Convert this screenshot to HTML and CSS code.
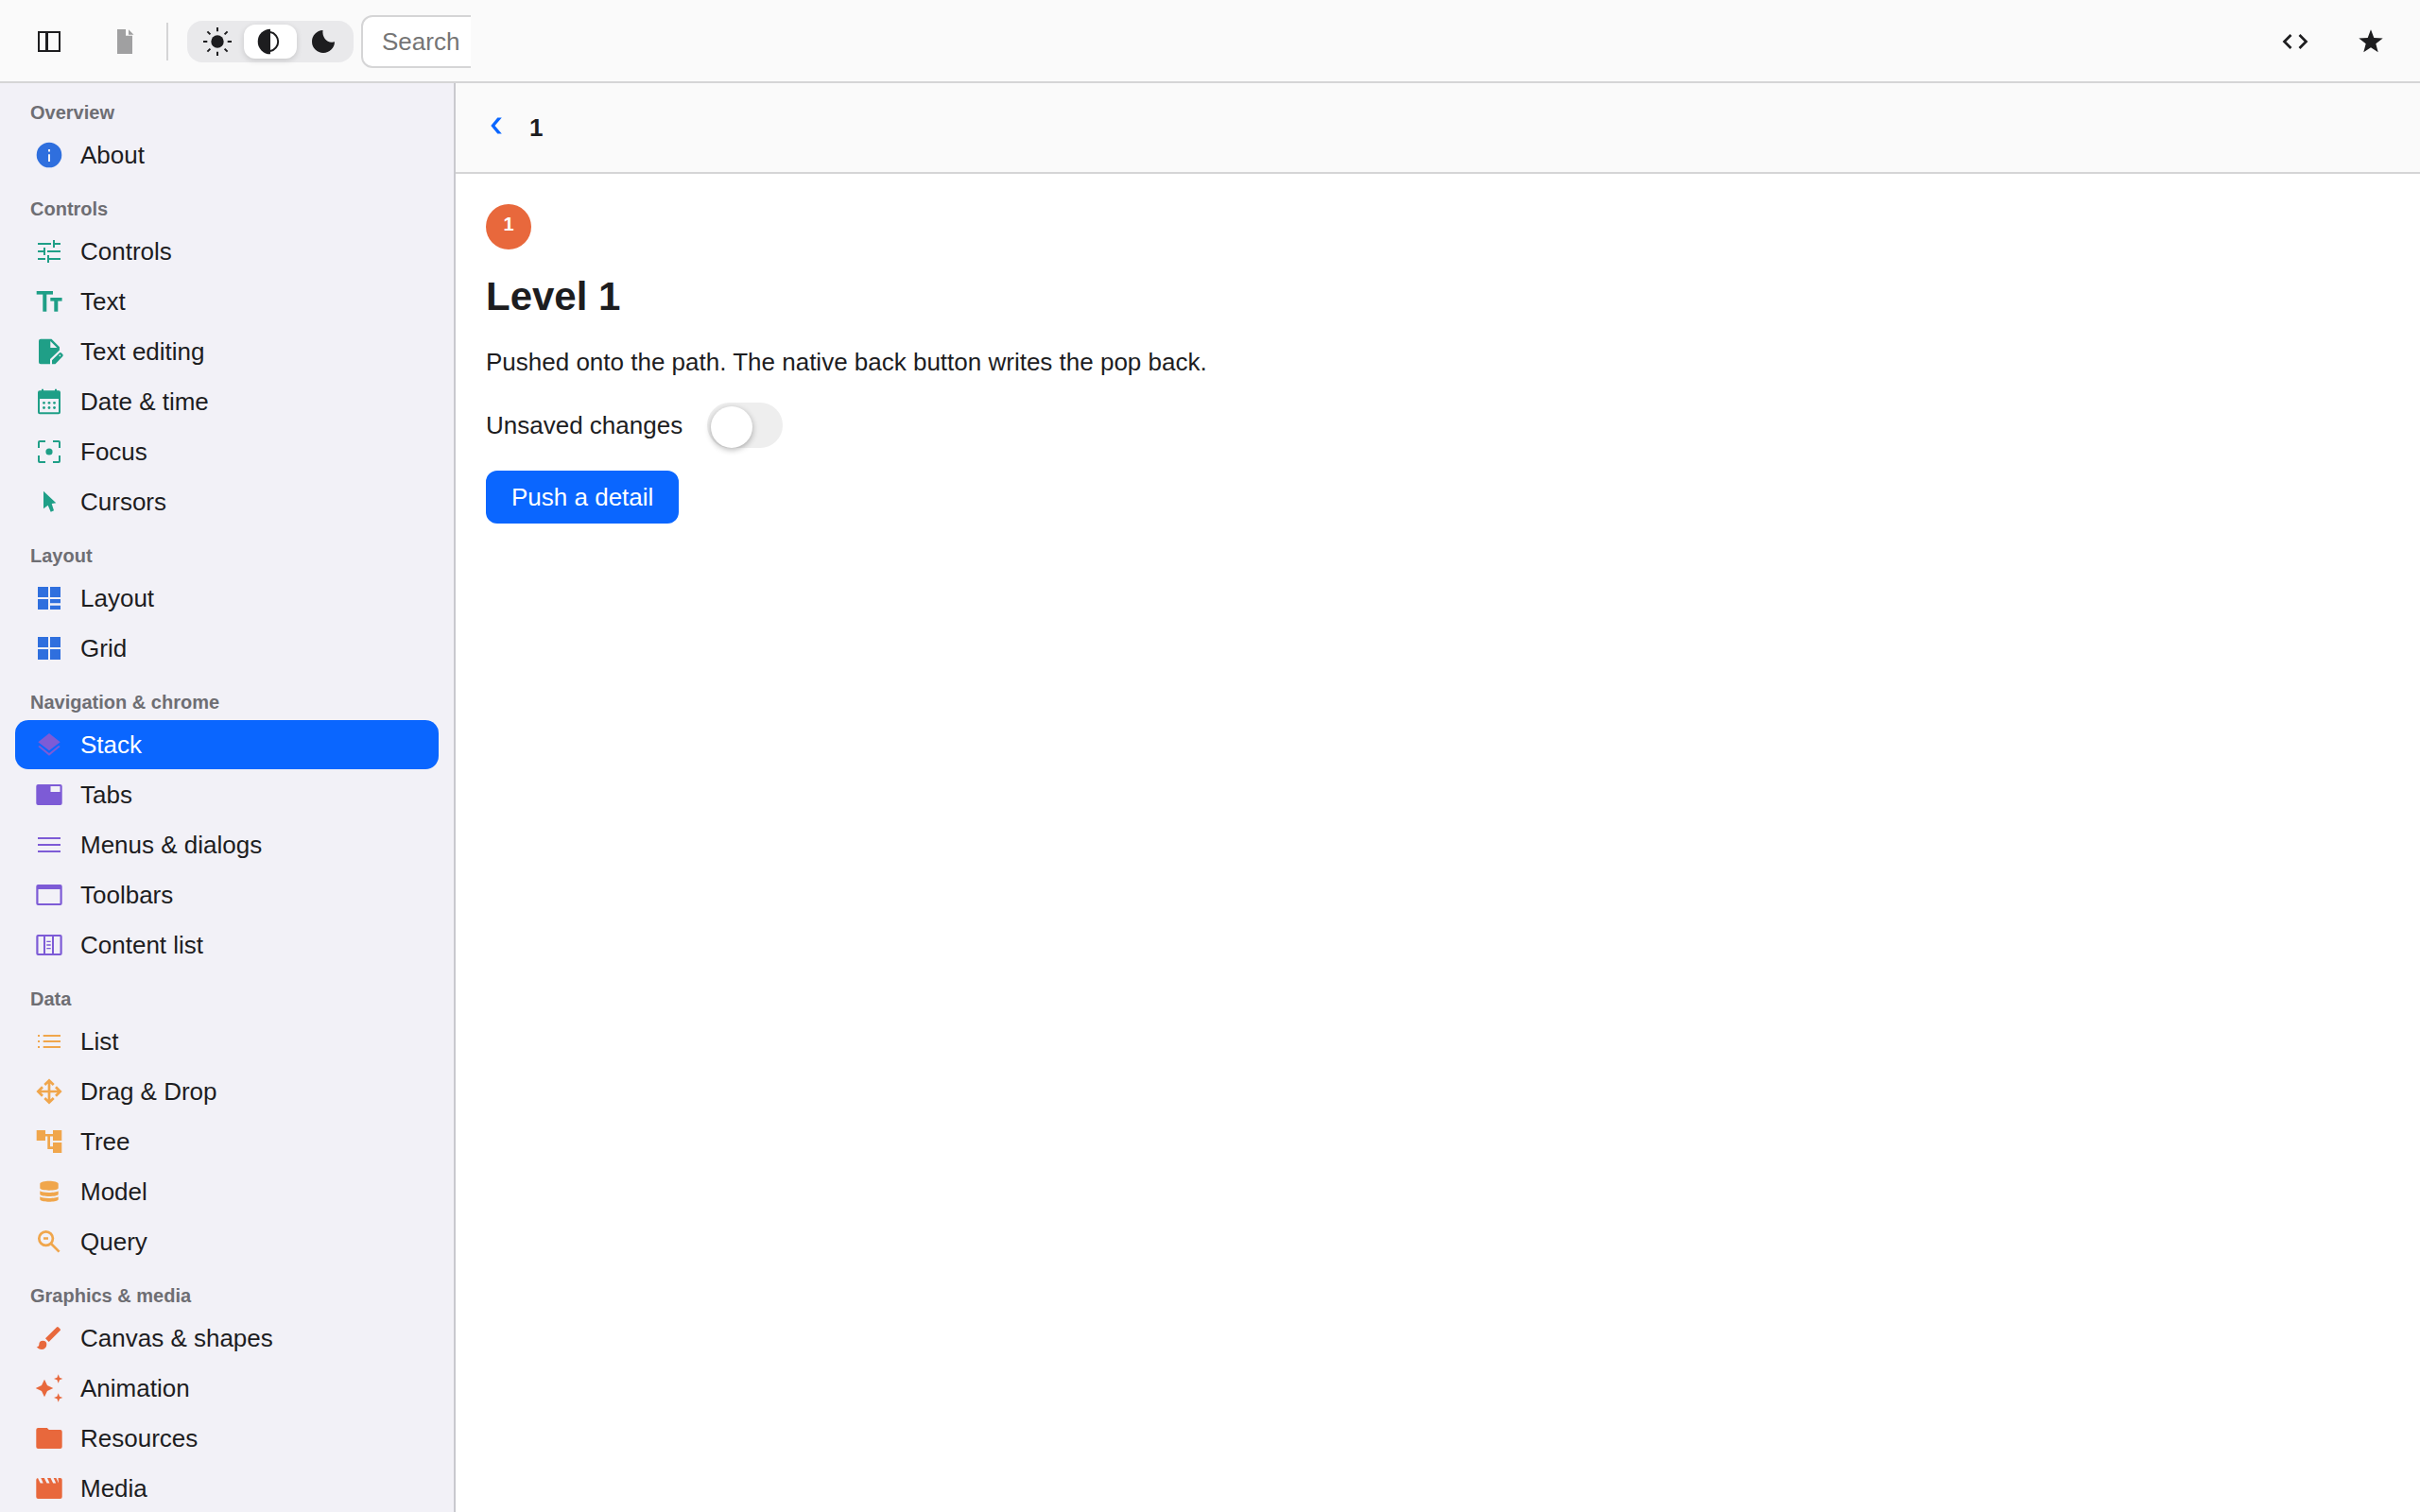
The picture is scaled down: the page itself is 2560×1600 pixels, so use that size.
FILE: index.html
```html
<!DOCTYPE html>
<html lang="en">
<head>
  <title>Stack</title>
  <meta charset="UTF-8" />
  <link rel="stylesheet" href="styles.css">
</head>
<body>
  <header class="toolbar">
    <button class="tool" aria-label="Toggle sidebar">
      <svg class="icon" viewBox="0 0 32 32"><path d="M4 5h24v22H4z M6 7v18h6V7z M15 7v18h11V7z" fill-rule="evenodd"/></svg>
    </button>
    <button class="tool" aria-label="New document" disabled>
      <svg class="icon" viewBox="0 0 32 32"><path d="M8 3h9v6.700h7V29H8z M20 3.300l5.500 5.500H20z"/></svg>
    </button>
    <span class="divider"></span>
    <div class="segmented">
      <button class="segment" aria-label="Light">
        <svg class="icon" viewBox="0 0 32 32"><circle cx="16" cy="16" r="6.700"/><path class="line" d="M16 1v4.300M16 26.700V31M1 16h4.300M26.700 16H31M5.400 5.400l3 3M23.600 23.600l3 3M5.400 26.600l3-3M23.600 8.400l3-3"/></svg>
      </button>
      <button class="segment active" aria-label="Auto">
        <svg class="icon" viewBox="0 0 32 32"><path d="M16 2.700a13.300 13.300 0 0 0 0 26.600z"/><path class="line" d="M16 6a10.200 10.200 0 0 1 0 20"/></svg>
      </button>
      <button class="segment" aria-label="Dark">
        <svg class="icon" viewBox="0 0 32 32"><path d="M15.500 4A12 12 0 1 0 28 16.300C20.500 18.500 14.500 12 15.500 4z"/></svg>
      </button>
    </div>
    <div class="search">
      <input type="text" placeholder="Search" aria-label="Search">
    </div>
    <span class="spacer"></span>
    <button class="tool" aria-label="View source">
      <svg class="icon" viewBox="0 0 32 32"><path class="line thick" d="M11.500 9l-7 7 7 7M20.500 9l7 7-7 7"/></svg>
    </button>
    <button class="tool" aria-label="Favorite">
      <svg class="icon" viewBox="0 0 32 32"><path d="M16 3.300l3.300 8.700 9.400.5-7.400 5.800 2.400 9-7.700-5-7.700 5 2.400-9L3.300 12.500l9.400-.5z"/></svg>
    </button>
  </header>

  <div class="layout">
    <nav class="sidebar">
      <section class="group blue">
        <h2>Overview</h2>
        <a class="item" href="#about">
          <svg class="icon" viewBox="0 0 32 32"><path fill-rule="evenodd" d="M16 2.700a13.300 13.300 0 1 0 0 26.600 13.300 13.300 0 0 0 0-26.600z M15 10v2.600h2V10z M15 15.300V23h2v-7.700z"/></svg>
          About
        </a>
      </section>

      <section class="group green">
        <h2>Controls</h2>
        <a class="item" href="#controls">
          <svg class="icon" viewBox="0 0 32 32"><path class="line" d="M4 8h14M21 4v8M21 8h7M4 16h7M11 12v8M14 16h14M4 24h8M15 20v8M15 24h13"/></svg>
          Controls
        </a>
        <a class="item" href="#text">
          <svg class="icon" viewBox="0 0 32 32"><rect x="2.700" y="5" width="17.300" height="3.600"/><rect x="9.300" y="5" width="4" height="21.700"/><rect x="17.300" y="12" width="12.300" height="3.600"/><rect x="21.300" y="12" width="4" height="14.700"/></svg>
          Text
        </a>
        <a class="item" href="#text-editing">
          <svg class="icon" viewBox="0 0 32 32"><path fill-rule="evenodd" d="M7 2.700h11.500L27 11.200v3.300L17 24v5.300H7a2 2 0 0 1-2-2V4.700a2 2 0 0 1 2-2z M17.300 5v7h7z"/><path fill-rule="evenodd" d="M19 29.300v-4l7.600-7.600a1.800 1.800 0 0 1 2.600 0l1 1a1.800 1.800 0 0 1 0 2.600l-7.700 8z M27.300 19.300l-1 1 1 1 1-1z"/></svg>
          Text editing
        </a>
        <a class="item" href="#date">
          <svg class="icon" viewBox="0 0 32 32"><path fill-rule="evenodd" d="M8 2.700h2v1.600h12V2.700h2v1.600h2a2 2 0 0 1 2 2v21a2 2 0 0 1-2 2H6a2 2 0 0 1-2-2v-21a2 2 0 0 1 2-2h2z M6 13v14.300h20V13z"/><circle cx="10.500" cy="17.300" r="1.400"/><circle cx="16" cy="17.300" r="1.400"/><circle cx="21.500" cy="17.300" r="1.400"/><circle cx="10.500" cy="22.500" r="1.400"/><circle cx="16" cy="22.500" r="1.400"/><circle cx="21.500" cy="22.500" r="1.400"/></svg>
          Date &amp; time
        </a>
        <a class="item" href="#focus">
          <svg class="icon" viewBox="0 0 32 32"><path class="line" d="M12 5H6a1 1 0 0 0-1 1v6M20 5h6a1 1 0 0 1 1 1v6M12 27H6a1 1 0 0 1-1-1v-6M20 27h6a1 1 0 0 0 1-1v-6"/><circle cx="16" cy="16" r="3.600"/></svg>
          Focus
        </a>
        <a class="item" href="#cursors">
          <svg class="icon" viewBox="0 0 32 32"><path d="M10 4.700l13.300 12.600-4.600.6 2.300 7.400-3.300 1.400-3-7-4.700 3.600z"/></svg>
          Cursors
        </a>
      </section>

      <section class="group blue">
        <h2>Layout</h2>
        <a class="item" href="#layout">
          <svg class="icon" viewBox="0 0 32 32"><path d="M4 4h11v11H4zM17 4h11v11H17zM4 17h11v11H4zM17 17h11v4.300H17zM17 23.700h11V28H17z"/></svg>
          Layout
        </a>
        <a class="item" href="#grid">
          <svg class="icon" viewBox="0 0 32 32"><path d="M4 4h11v11H4zM17 4h11v11H17zM4 17h11v11H4zM17 17h11v11H17z"/></svg>
          Grid
        </a>
      </section>

      <section class="group purple">
        <h2>Navigation &amp; chrome</h2>
        <a class="item selected" href="#stack">
          <svg class="icon" viewBox="0 0 32 32"><path d="M16 4l11.700 9.300-11.700 9-11.700-9z M4.300 18L6 17l10 8 10-8 1.700 1L16 27.700z"/></svg>
          Stack
        </a>
        <a class="item" href="#tabs">
          <svg class="icon" viewBox="0 0 32 32"><path fill-rule="evenodd" d="M4.300 5h23.400a2 2 0 0 1 2 2v18a2 2 0 0 1-2 2H4.300a2 2 0 0 1-2-2V7a2 2 0 0 1 2-2z M17.500 7v6h10V7z"/></svg>
          Tabs
        </a>
        <a class="item" href="#menus">
          <svg class="icon" viewBox="0 0 32 32"><path class="line" d="M4 9h24M4 16h24M4 23h24"/></svg>
          Menus &amp; dialogs
        </a>
        <a class="item" href="#toolbars">
          <svg class="icon" viewBox="0 0 32 32"><path fill-rule="evenodd" d="M4.300 5h23.400a2 2 0 0 1 2 2v18a2 2 0 0 1-2 2H4.300a2 2 0 0 1-2-2V7a2 2 0 0 1 2-2z M4.500 10v15h23V10z"/></svg>
          Toolbars
        </a>
        <a class="item" href="#content-list">
          <svg class="icon" viewBox="0 0 32 32"><path fill-rule="evenodd" d="M4.300 5h23.400a2 2 0 0 1 2 2v18a2 2 0 0 1-2 2H4.300a2 2 0 0 1-2-2V7a2 2 0 0 1 2-2z M4.500 7v18H10V7z M12 7v18h7V7z M21 7v18h6.500V7z"/><path d="M13.300 11.700h4.400v1.300h-4.400zM13.300 15.300h4.400v1.400h-4.400zM13.300 19h4.400v1.300h-4.400z"/></svg>
          Content list
        </a>
      </section>

      <section class="group amber">
        <h2>Data</h2>
        <a class="item" href="#list">
          <svg class="icon" viewBox="0 0 32 32"><path class="line" d="M4 10h2M9.700 10H28M4 16h2M9.700 16H28M4 22h2M9.700 22H28"/></svg>
          List
        </a>
        <a class="item" href="#drag">
          <svg class="icon" viewBox="0 0 32 32"><path class="line thick" d="M16 4v24M4 16h24M11.300 9L16 4.300 20.700 9M11.300 23l4.700 4.700 4.700-4.700M9 11.300L4.300 16 9 20.700M23 11.300l4.700 4.700-4.700 4.700"/></svg>
          Drag &amp; Drop
        </a>
        <a class="item" href="#tree">
          <svg class="icon" viewBox="0 0 32 32"><path d="M2.700 4H12v4h8V4h9.300v11H20v-4.400h-3v10.700h3V17h9.300v11H20v-4h-5.700V10.600H12V15H2.700z"/></svg>
          Tree
        </a>
        <a class="item" href="#model">
          <svg class="icon" viewBox="0 0 32 32"><path d="M6.300 7.700c0-4 19.400-4 19.400 0v4.600c0 3.200-19.400 3.200-19.400 0z M6.300 15.300c2.700 2.300 16.700 2.300 19.400 0v3.400c0 3-19.400 3-19.400 0z M6.300 21.300c2.700 2.300 16.700 2.300 19.400 0v3c0 3.200-19.400 3.200-19.400 0z"/></svg>
          Model
        </a>
        <a class="item" href="#query">
          <svg class="icon" viewBox="0 0 32 32"><path class="line thick" d="M18 18l8.600 8.600M10 12.500h5"/><circle class="line thick" cx="12.600" cy="12.600" r="7.300"/></svg>
          Query
        </a>
      </section>

      <section class="group orange">
        <h2>Graphics &amp; media</h2>
        <a class="item" href="#canvas">
          <svg class="icon" viewBox="0 0 24 24"><path d="M20.710 4.630l-1.340-1.340a1 1 0 0 0-1.410 0L9 12.250 11.750 15l8.960-8.960a1 1 0 0 0 0-1.410zM7 14a3 3 0 0 0-3 3c0 1.310-1.160 2-2 2 .92 1.220 2.490 2 4 2a4 4 0 0 0 4-4 3 3 0 0 0-3-3z"/></svg>
          Canvas &amp; shapes
        </a>
        <a class="item" href="#animation">
          <svg class="icon" viewBox="0 0 32 32"><path d="M11 6.700l3 6.300 6.300 3-6.300 3-3 6.300L8 19l-6.300-3L8 13zM25.700 1.300l1.300 3.400 3.300 1.300-3.300 1.300-1.300 3.400-1.300-3.400L21 6l3.400-1.300zM25.700 21.300l1.300 3.400 3.300 1.300-3.300 1.300-1.300 3.400-1.300-3.400L21 26l3.400-1.300z"/></svg>
          Animation
        </a>
        <a class="item" href="#resources">
          <svg class="icon" viewBox="0 0 32 32"><path d="M4.300 5h9.500l2 2h11.900a2 2 0 0 1 2 2v16a2 2 0 0 1-2 2H4.300a2 2 0 0 1-2-2V7a2 2 0 0 1 2-2z"/></svg>
          Resources
        </a>
        <a class="item" href="#media">
          <svg class="icon" viewBox="0 0 32 32"><path d="M4 5l2.700 5.500h3L7.300 5h3.500l2.700 5.500h3L14 5h3.500l2.700 5.500h3L20.700 5h2.700l2.700 5.500L25.500 5h2.200a2 2 0 0 1 2 2v18a2 2 0 0 1-2 2H4.300a2 2 0 0 1-2-2V7A2 2 0 0 1 4 5z"/></svg>
          Media
        </a>
      </section>
    </nav>

    <main class="detail">
      <div class="navbar">
        <button class="back" aria-label="Back">
          <svg class="icon" viewBox="0 0 32 32"><path d="M12.300 5.500h4.500L9.500 14l7.300 8.500h-4.500L5.300 14z"/></svg>
        </button>
        <span class="title">1</span>
      </div>
      <div class="content">
        <span class="level">1</span>
        <h1>Level 1</h1>
        <p>Pushed onto the path. The native back button writes the pop back.</p>
        <div class="field">
          <label for="unsaved">Unsaved changes</label>
          <input class="switch" type="checkbox" id="unsaved">
        </div>
        <button class="primary">Push a detail</button>
      </div>
    </main>
  </div>
</body>
</html>
```
FILE: styles.css
```css
* {
  box-sizing: border-box;
}

body {
  margin: 0;
  height: 100vh;
  display: flex;
  flex-direction: column;
  overflow: hidden;
  font-family: "Liberation Sans", Arial, sans-serif;
  font-size: 26px;
  line-height: 38px;
  color: #1d1d1f;
  background: #fff;
}

button, input {
  font: inherit;
  color: inherit;
}

button {
  display: flex;
  align-items: center;
  justify-content: center;
  padding: 0;
  border: none;
  background: none;
  cursor: pointer;
}

h1, h2, p {
  margin: 0;
}

.icon {
  width: 32px;
  height: 32px;
  flex: none;
  fill: currentColor;
}

.line {
  fill: none;
  stroke: currentColor;
  stroke-width: 2;
}

.thick {
  stroke-width: 2.7;
}

/* Top toolbar */
.toolbar {
  display: flex;
  align-items: center;
  flex: none;
  height: 88px;
  padding: 2px 12px 0;
  background: #fafafa;
  border-bottom: 2px solid #d5d5d6;
}

.tool {
  width: 80px;
  height: 56px;
}

.tool:disabled {
  color: #a0a0a1;
  cursor: default;
}

.divider {
  width: 2px;
  height: 40px;
  margin: 0 20px 0 4px;
  background: #d5d5d6;
}

.segmented {
  display: flex;
  height: 44px;
  padding: 4px;
  border-radius: 16px;
  background: #e9e9eb;
}

.segment {
  width: 56px;
  border-radius: 12px;
}

.segment.active {
  background: #fff;
  box-shadow: 0 2px 6px rgba(0, 0, 0, 0.15);
}

.search {
  width: 116px;
  margin-left: 8px;
  overflow: hidden;
}

.search input {
  display: block;
  width: 320px;
  height: 56px;
  padding: 0 20px;
  border: 2px solid #d5d5d6;
  border-radius: 12px;
  background: #fff;
  outline: none;
}

.search input::placeholder {
  color: #757575;
}

.spacer {
  flex: 1;
}

/* Sidebar */
.layout {
  display: flex;
  flex: 1;
  min-height: 0;
}

.sidebar {
  flex: none;
  width: 482px;
  padding: 19px 16px 0;
  display: flex;
  flex-direction: column;
  gap: 19px;
  overflow: hidden;
  background: #f2f1f7;
  border-right: 2px solid #c9c9ce;
}

.group {
  flex: none;
  display: flex;
  flex-direction: column;
  gap: 1px;
}

.group h2 {
  padding: 0 16px 6px;
  font-size: 20px;
  line-height: 24px;
  color: #6e6e73;
}

.item {
  display: flex;
  align-items: center;
  gap: 17px;
  height: 52px;
  padding: 0 20px;
  border-radius: 14px;
  color: #1d1d1f;
  text-decoration: none;
}

.item.selected {
  background: #0a66ff;
  color: #fff;
}

.blue .icon { color: #2f6fde; }
.green .icon { color: #1f9f87; }
.purple .icon { color: #7d5bd6; }
.amber .icon { color: #f0a64c; }
.orange .icon { color: #e8683c; }

/* Detail pane */
.detail {
  flex: 1;
  min-width: 0;
}

.navbar {
  display: flex;
  align-items: center;
  gap: 14px;
  height: 96px;
  padding: 0 32px;
  background: #fafafa;
  border-bottom: 2px solid #d5d5d6;
}

.back {
  color: #0a66ff;
}

.title {
  font-weight: bold;
}

.content {
  display: flex;
  flex-direction: column;
  align-items: flex-start;
  gap: 24px;
  padding: 32px;
}

.level {
  width: 48px;
  height: 48px;
  border-radius: 50%;
  background: #e8683c;
  color: #fff;
  font-size: 20px;
  font-weight: bold;
  line-height: 42px;
  text-align: center;
}

h1 {
  font-size: 42px;
  line-height: 52px;
}

.field {
  display: flex;
  align-items: center;
  gap: 26px;
}

.switch {
  appearance: none;
  width: 80px;
  height: 48px;
  margin: 0;
  padding: 4px;
  border-radius: 24px;
  background: #eee;
  cursor: pointer;
}

.switch::before {
  content: "";
  display: block;
  width: 44px;
  height: 44px;
  border-radius: 50%;
  background: #fff;
  box-shadow: 0 2px 6px rgba(0, 0, 0, 0.3);
}

.switch:checked {
  background: #0a66ff;
}

.primary {
  height: 56px;
  padding: 0 27px;
  border-radius: 12px;
  background: #0a66ff;
  color: #fff;
}
```
